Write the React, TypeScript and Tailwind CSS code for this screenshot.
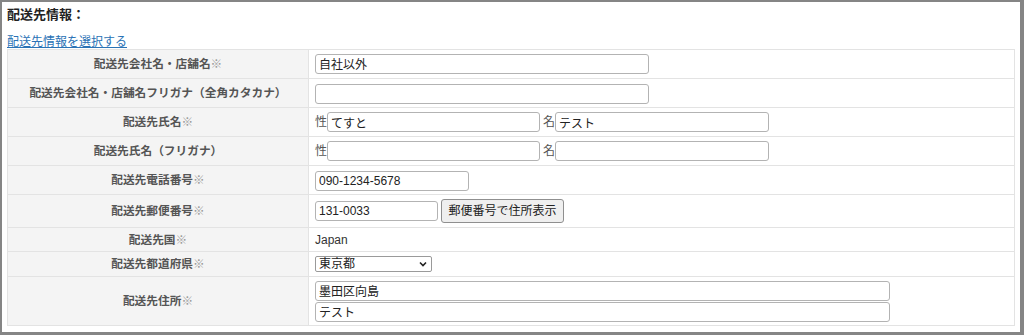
import React from "react";

const font = "font-['Liberation_Sans','Noto_Sans_CJK_JP',sans-serif]";

function Label({ text, req = true }: { text: string; req?: boolean }) {
    return (
        <td className="w-[301px] bg-[#f4f4f4] border border-[#e3e3e3] text-center align-middle text-[11.7px] font-bold text-[#555] leading-none">
            {text}
            {req && <span className="text-[#999] font-normal">※</span>}
        </td>
    );
}

function Input({ value = "", w }: { value?: string; w: string }) {
    return (
        <input
            readOnly
            value={value}
            className={`${w} h-[20px] border border-[#b3b3b3] rounded-[3px] bg-white px-[3px] text-[12px] text-[#222] leading-none outline-none ${font}`}
        />
    );
}

export default function App() {
    return (
        <div className={`w-[1024px] h-[335px] bg-white border-l-2 border-t-2 border-r-4 border-b-[3px] border-[#858585] pl-[5px] pr-[4px] ${font}`}>
            <h1 className="pt-[5px] text-[13px] font-bold text-[#222] leading-[16px]">配送先情報：</h1>
            {/* 選択リンク */}
            <a href="#" className="block mt-[13px] text-[12px] text-[#2a72b5] underline leading-[13px]">配送先情報を選択する</a>
            <table className="w-[1008px] border-collapse">
                <tbody>
                    <tr className="h-[29px]">
                        <Label text="配送先会社名・店舗名" />
                        <td className="border border-[#e3e3e3] pl-[6px]"><Input value="自社以外" w="w-[334px]" /></td>
                    </tr>
                    <tr className="h-[29px]">
                        <Label text="配送先会社名・店舗名フリガナ（全角カタカナ）" req={false} />
                        <td className="border border-[#e3e3e3] pl-[6px]"><Input w="w-[334px]" /></td>
                    </tr>
                    <tr className="h-[29px]">
                        <Label text="配送先氏名" />
                        <td className="border border-[#e3e3e3] pl-[6px]">
                            <div className="flex items-center text-[12px] text-[#555]">
                                <span>性</span><Input value="てすと" w="w-[213px]" />
                                <span className="ml-[3px]">名</span><Input value="テスト" w="w-[214px]" />
                            </div>
                        </td>
                    </tr>
                    <tr className="h-[29px]">
                        <Label text="配送先氏名（フリガナ）" req={false} />
                        <td className="border border-[#e3e3e3] pl-[6px]">
                            <div className="flex items-center text-[12px] text-[#555]">
                                <span>性</span><Input w="w-[213px]" />
                                <span className="ml-[3px]">名</span><Input w="w-[214px]" />
                            </div>
                        </td>
                    </tr>
                    <tr className="h-[29px]">
                        <Label text="配送先電話番号" />
                        <td className="border border-[#e3e3e3] pl-[6px]"><Input value="090-1234-5678" w="w-[154px]" /></td>
                    </tr>
                    <tr className="h-[33px]">
                        <Label text="配送先郵便番号" />
                        <td className="border border-[#e3e3e3] pl-[6px]">
                            <div className="flex items-center gap-[3px]">
                                <Input value="131-0033" w="w-[123px]" />
                                <button className="w-[123px] h-[24px] bg-[#efefef] border border-[#8f8f8f] rounded-[3px] text-[12px] text-[#222]">郵便番号で住所表示</button>
                            </div>
                        </td>
                    </tr>
                    <tr className="h-[24px]">
                        <Label text="配送先国" />
                        <td className="border border-[#e3e3e3] pl-[6px] text-[12px] text-[#333]">Japan</td>
                    </tr>
                    <tr className="h-[25px]">
                        <Label text="配送先都道府県" />
                        <td className="border border-[#e3e3e3] pl-[6px]">
                            <div className="w-[117px] h-[16px] border border-[#9a9a9a] rounded-[2px] flex items-center justify-between px-[3px] text-[12px] text-[#222] leading-none">
                                <span>東京都</span>
                                <svg width="10" height="10" viewBox="0 0 10 10"><path d="M2 3.5 L5 6.5 L8 3.5" fill="none" stroke="#222" strokeWidth="1.6" /></svg>
                            </div>
                        </td>
                    </tr>
                    <tr className="h-[49px]">
                        <Label text="配送先住所" />
                        <td className="border border-[#e3e3e3] pl-[6px]">
                            <div className="flex flex-col gap-[1px]">
                                <Input value="墨田区向島" w="w-[575px]" />
                                <Input value="テスト" w="w-[575px]" />
                            </div>
                        </td>
                    </tr>
                </tbody>
            </table>
        </div>
    );
}
